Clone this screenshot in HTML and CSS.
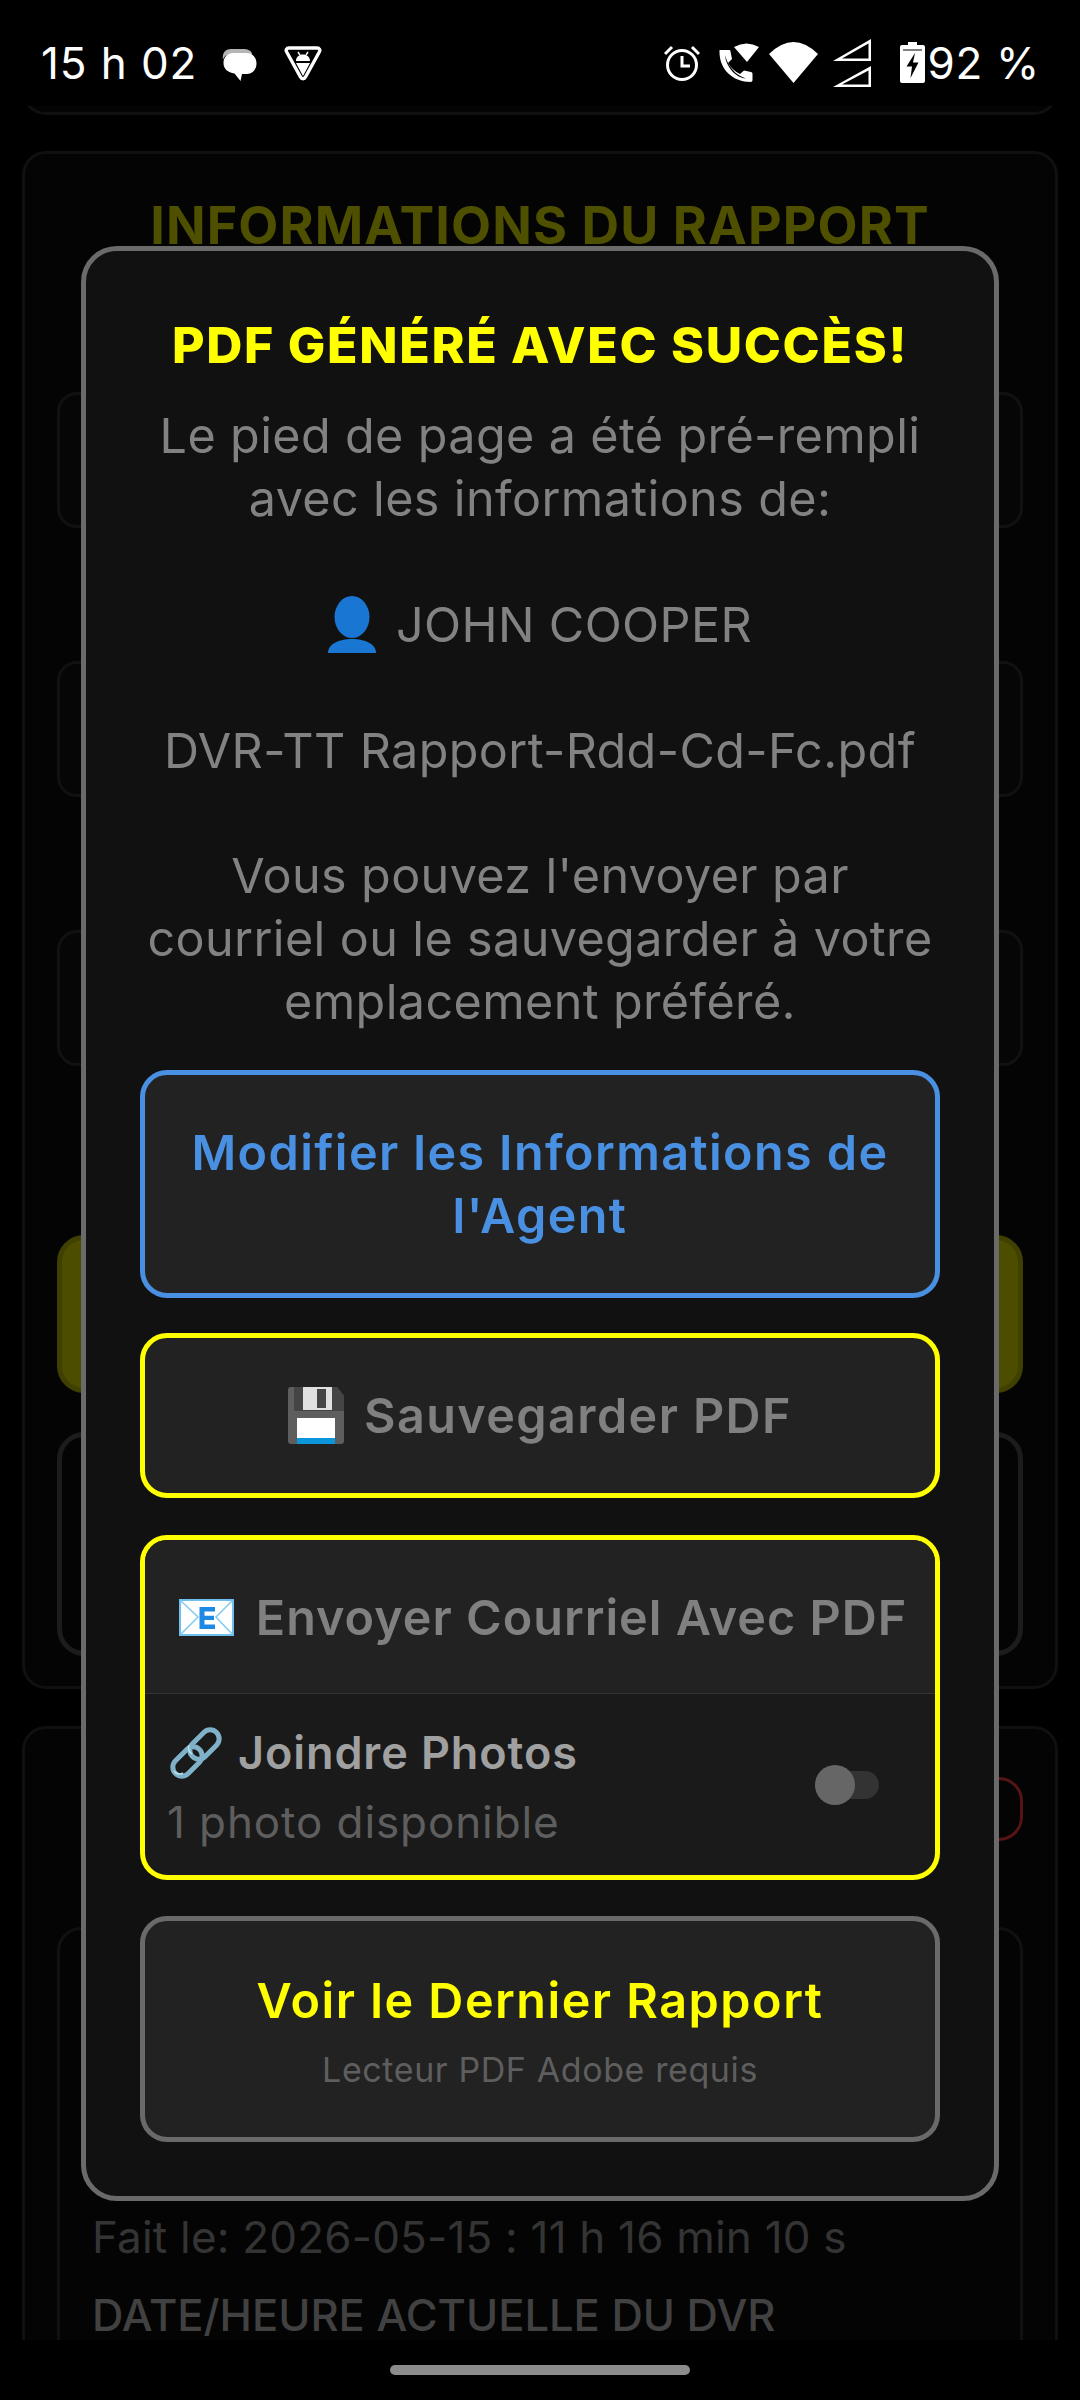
FILE: index.html
```html
<!DOCTYPE html>
<html lang="fr">
<head>
<meta charset="utf-8">
<title>PDF généré</title>
<link rel="stylesheet" href="styles.css">
</head>
<body>
<div class="app">
  <header class="status">
    <span class="clock">15 h 02</span>
    <svg class="ic-chat" viewBox="0 0 35 33"><path class="ghost" d="M1 12C0 5 3 1 9 1h12c5 0 9 2 9 5H10C5 6 2 8 1 12z"/><path class="wh" d="M11 5h14c5.500 0 9.500 4.500 9.500 10.500S30.500 26 25 26h-5l-1.500 7-6-7.500C6 24.500 1.500 21 1.500 15 1.500 9 5.500 5 11 5z"/></svg>
    <svg class="ic-bug" viewBox="0 0 38 35"><path class="line" d="M5 2h28c2.500 0 3.500 2 2.300 4L21.500 31c-1.200 2.300-3.800 2.300-5 0L2.700 6C1.500 4 2.500 2 5 2z"/><path class="wh" d="M12 15c0-4 3-6.500 7-6.500s7 2.500 7 6.500zM12 17h14l-7 13z"/><path class="thin" d="M14 6l2 3M24 6l-2 3"/></svg>
    <span class="spacer"></span>
    <svg class="ic-alarm" viewBox="0 0 36 37"><circle class="ring" cx="18" cy="21" r="14.500"/><path class="ring" d="M18 12v10h8M1 10l7-7M35 10l-7-7"/></svg>
    <svg class="ic-call" viewBox="0 0 40 40"><path class="wh" d="M15 4Q27.500-3 40 4L28 19zM1 7h9c1 0 1.500.5 1.500 1.500L13 16l-4 4c3 5 7 8.500 12 11l4-3.500 7 1.500c1 .2 1.500 1 1.500 2v6c0 1.300-.7 2-2 2-17 0-31-12-31-30V8c0-.7 0-1 .5-1z"/><path class="cut" d="M6 12c1 4 3 9 7 14s9 8 14 9.500C18 35 7 25 6 12z"/></svg>
    <svg class="ic-wifi" viewBox="0 0 49 41"><path class="wh" d="M0 12Q24.500-12 49 12L24.500 41z"/></svg>
    <svg class="ic-signal" viewBox="0 0 38 48"><path class="wh odd" d="M0 22L38 0v22zM9 19.500h26.500V4.500zM0 48l38-21v21zM9 45.500h26.500V31.500z"/></svg>
    <svg class="ic-batt" viewBox="0 0 25 41"><path class="wh" d="M8 0h9v3h6c1.200 0 2 .8 2 2v34c0 1.200-.8 2-2 2H2c-1.200 0-2-.8-2-2V5c0-1.200.8-2 2-2h6z"/><path class="blk" d="M3 7.500h19v1H3zM15 11L6.500 24.500H12L10.500 36 18.500 20.500H13z"/></svg>
    <span class="pct">92 %</span>
  </header>

  <main class="page">
    <section class="card card-clip"></section>
    <section class="card card-info">
      <h2 class="info-title">INFORMATIONS DU RAPPORT</h2>
      <div class="field field-a"></div>
      <div class="field field-b"></div>
      <div class="field field-b"></div>
      <div class="olive"></div>
      <div class="darkbox"></div>
    </section>
    <section class="card card-log">
      <div class="redbtn"></div>
      <div class="logbox">
        <p class="fait">Fait le: 2026-05-15 : 11 h 16 min 10 s</p>
        <p class="dateh">DATE/HEURE ACTUELLE DU DVR</p>
      </div>
    </section>
  </main>

  <footer class="nav"><span class="pill"></span></footer>

  <div class="modal">
    <h1 class="m-title">PDF GÉNÉRÉ AVEC SUCCÈS!</h1>
    <p class="m-body">Le pied de page a été pré-rempli<br>avec les informations de:<br><br><svg class="ic-person" viewBox="0 0 48 57"><ellipse cx="24" cy="21" rx="17.500" ry="21"/><path d="M0 57c0-9 11-14 24-14s24 5 24 14z"/></svg> JOHN COOPER<br><br>DVR-TT Rapport-Rdd-Cd-Fc.pdf<br><br>Vous pouvez l'envoyer par<br>courriel ou le sauvegarder à votre<br>emplacement préféré.</p>
    <button class="btn btn-blue">Modifier les Informations de<br>l'Agent</button>
    <button class="btn btn-save">
      <svg class="ic-floppy" viewBox="0 0 56 57"><path fill="#5e5e5e" d="M3 0h46l7 9v45c0 2-1 3-3 3H3c-2 0-3-1-3-3V3c0-2 1-3 3-3z"/><path fill="#454545" d="M3 0h46l7 9v15H6V0z"/><path fill="#e0e0e0" d="M15 0h29v23H15z"/><path fill="#454545" d="M29 2h9v19h-9z"/><path fill="#fff" d="M9 31h38v20H9z"/><path fill="#0b96dc" d="M9 51h38v6H9z"/></svg>
      <span>Sauvegarder PDF</span>
    </button>
    <div class="mailbox">
      <div class="mail-top">
        <svg class="ic-mail" viewBox="0 0 55 37"><path fill="#fff" stroke="#6fc0ee" stroke-width="2" d="M1 1h53v35H1z"/><path fill="none" stroke="#86cbf0" stroke-width="1.600" d="M2 2l17 16L2 35M53 2L37 18l16 17"/><path fill="#1e88e5" d="M20.500 8H36v4.500H25.500v4.300H35v4.200h-9.500v4.500H36V30H20.500z"/></svg>
        <span>Envoyer Courriel Avec PDF</span>
      </div>
      <div class="mail-row">
        <div class="mail-text">
          <div class="join"><svg class="ic-link" viewBox="0 0 52 52"><g fill="none" stroke="#7fb2c8" stroke-width="5"><rect x="17.500" y="8.500" width="34" height="18" rx="9" transform="rotate(-45 34.500 17.500)"/><rect x="0.500" y="25.500" width="34" height="18" rx="9" transform="rotate(-45 17.500 34.500)"/></g><path fill="none" stroke="#b4e0ea" stroke-width="1.600" d="M19 18c-1.500 3 0 7 3 9M4 44c2 3 6 4 9 2"/></svg><span>Joindre Photos</span></div>
          <div class="avail">1 photo disponible</div>
        </div>
        <div class="toggle"><span class="knob"></span></div>
      </div>
    </div>
    <button class="btn btn-view">
      <span class="view-main">Voir le Dernier Rapport</span>
      <span class="view-sub">Lecteur PDF Adobe requis</span>
    </button>
  </div>
</div>
</body>
</html>
```

FILE: styles.css
```css
* { box-sizing: border-box; }
html, body { margin: 0; padding: 0; background: #000; }
body { font-family: Inter, "Open Sans", "Liberation Sans", sans-serif; }
svg { display: block; flex: none; }

.app { position: relative; width: 1080px; height: 2400px; overflow: hidden; background: #000; }

/* status bar */
.status { height: 106px; padding: 19px 40px 0 41px; display: flex; align-items: center; color: #fff; font-size: 44px; }
.clock { letter-spacing: 0.9px; margin-right: 25px; white-space: nowrap; }
.pct { letter-spacing: 0.7px; margin-left: 3px; white-space: nowrap; }
.spacer { flex: 1; }
.wh { fill: #fff; }
.blk { fill: #000; }
.odd { fill-rule: evenodd; }
.ghost { fill: #b5b5b5; }
.line { fill: none; stroke: #fff; stroke-width: 3.4; }
.thin { fill: none; stroke: #fff; stroke-width: 1.4; }
.ring { fill: none; stroke: #fff; stroke-width: 3; }
.cut { fill: #000; }
.ic-chat { width: 35px; height: 33px; margin-top: 4px; margin-right: 27px; }
.ic-bug { width: 38px; height: 35px; margin-top: 2px; }
.ic-alarm { width: 36px; height: 37px; margin-right: 19px; }
.ic-call { width: 40px; height: 40px; margin-right: 10px; }
.ic-wifi { width: 49px; height: 41px; margin-right: 15px; }
.ic-signal { width: 38px; height: 48px; margin-right: 29px; }
.ic-batt { width: 25px; height: 41px; }

/* dimmed page behind the dialog */
.page { height: 2234px; overflow: hidden; padding: 0 22px; }
.card { background: #040404; border: 3px solid #101010; border-radius: 24px; padding: 0 32px; display: flex; flex-direction: column; }
.card-clip { height: 60px; margin-top: -51px; }
.card-info { margin-top: 36px; height: 1538px; }
.info-title { margin: 42px 0 0; height: 60px; line-height: 60px; text-align: center; font-size: 52px; font-weight: 700; letter-spacing: 1.1px; color: #4f4f00; white-space: nowrap; }
.field { height: 136px; border: 3px solid #111; border-radius: 20px; background: #060606; }
.field-a { margin-top: 136px; }
.field-b { margin-top: 133px; }
.olive { margin-top: 169px; height: 158px; background: #4d4d00; border: 5px solid #404000; border-radius: 27px; }
.darkbox { margin-top: 39px; height: 224px; border: 5px solid #1c1c1c; border-radius: 27px; }
.card-log { margin-top: 37px; height: 800px; }
.redbtn { align-self: flex-end; width: 300px; height: 84px; margin-top: 48px; border: 3px solid #561414; border-radius: 24px; }
.logbox { margin-top: 86px; height: 700px; border: 3px solid #111; border-radius: 24px; padding: 277px 32px 0; }
.fait, .dateh { margin: 0; height: 60px; line-height: 60px; white-space: nowrap; }
.fait { color: #343434; font-size: 44px; letter-spacing: 0.2px; }
.dateh { margin-top: 18px; color: #414141; font-size: 43.500px; font-weight: 500; letter-spacing: 0; }

/* gesture bar */
.nav { height: 60px; background: #000; display: flex; justify-content: center; padding-top: 25px; }
.pill { width: 300px; height: 10px; border-radius: 5px; background: #8c8c8c; }

/* dialog */
.modal { position: absolute; left: 81px; top: 246px; width: 918px; background: #111; border: 5px solid #6a6a6a; border-radius: 36px; padding: 62px 54px 54px; display: flex; flex-direction: column; }
.m-title { margin: 0; height: 64px; line-height: 64px; text-align: center; font-size: 50px; font-weight: 800; letter-spacing: 1.7px; color: #ff0; white-space: nowrap; }
.m-body { margin: 28px 0 36px; text-align: center; font-size: 48.500px; letter-spacing: 0.38px; line-height: 62.900px; color: #828282; white-space: nowrap; }
.ic-person { display: inline-block; width: 48px; height: 57px; margin-right: 6px; vertical-align: -11px; fill: #1976d2; }

.btn { display: flex; align-items: center; justify-content: center; width: 100%; margin: 0; padding: 0; background: #222; border: 5px solid #ff0; border-radius: 27px; font-family: inherit; font-size: 48.500px; font-weight: 600; letter-spacing: 1.4px; color: #808080; text-align: center; }
.btn-blue { height: 228px; display: block; line-height: 63px; border-color: #4a90e2; color: #4a90e2; }
.btn-save { height: 165px; margin-top: 35px; gap: 20px; }
.ic-floppy { width: 56px; height: 57px; }

.mailbox { margin-top: 37px; height: 345px; border: 5px solid #ff0; border-radius: 27px; background: #1a1a1a; overflow: hidden; }
.mail-top { height: 154px; padding: 2px 0 0 6px; background: #222; border-bottom: 1px solid #333; display: flex; align-items: center; justify-content: center; gap: 22px; font-size: 48.500px; font-weight: 600; letter-spacing: 1px; color: #808080; white-space: nowrap; }
.ic-mail { width: 55px; height: 37px; }
.mail-row { height: 181px; padding: 6px 56px 0 22px; display: flex; align-items: center; justify-content: space-between; }
.join { display: flex; align-items: center; gap: 16px; margin-left: 3px; height: 58px; font-size: 45px; font-weight: 600; letter-spacing: 0.9px; color: #a0a0a0; white-space: nowrap; }
.ic-link { width: 52px; height: 52px; }
.avail { margin-top: 10px; height: 60px; line-height: 60px; font-size: 44px; letter-spacing: 0.9px; color: #5e5e5e; white-space: nowrap; }
.toggle { position: relative; width: 64px; height: 28px; margin-top: -6px; border-radius: 14px; background: #333; }
.knob { position: absolute; left: 0; top: -6px; width: 40px; height: 40px; border-radius: 50%; background: #666; }

.btn-view { height: 226px; margin-top: 36px; padding-top: 3px; flex-direction: column; border-color: #6a6a6a; }
.view-main { color: #ff0; font-size: 48.500px; font-weight: 600; letter-spacing: 1.5px; line-height: 60px; }
.view-sub { margin-top: 18px; color: #5e5e5e; font-size: 34px; font-weight: 400; letter-spacing: 0.6px; line-height: 42px; }
```
